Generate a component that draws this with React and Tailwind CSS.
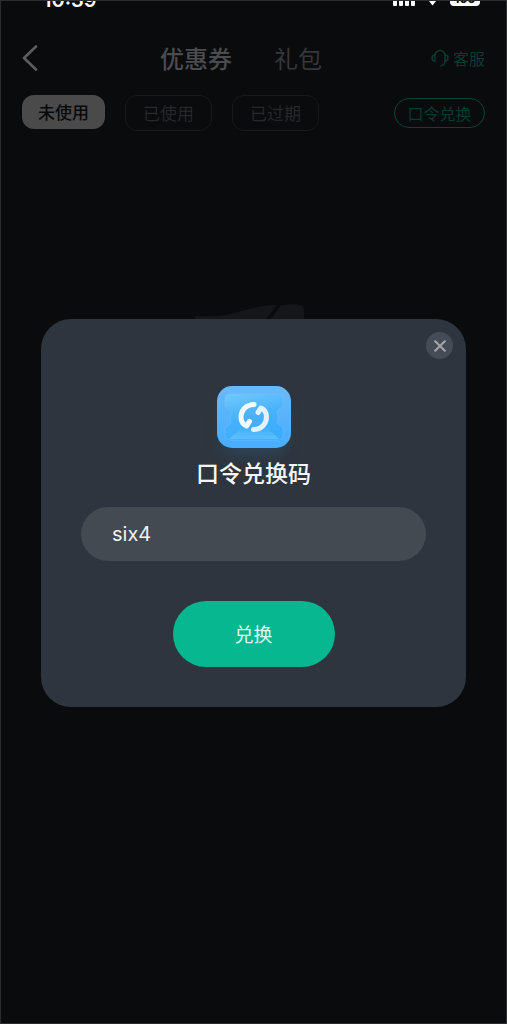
import { useState } from 'react';

const filters = ['未使用', '已使用', '已过期'];

const StatusBar = () => (
  <div className="h-[7px] overflow-hidden flex items-end justify-between pl-[42px] pr-[26px] text-white">
    <span className="text-[20px] leading-4 font-semibold font-['Inter',sans-serif]">10:39</span>
    <svg className="w-[90px] h-[7px]" viewBox="0 0 90 7" fill="currentColor">
      <rect x="3" y="-4" width="4" height="9" rx="1" />
      <rect x="9" y="-4" width="4" height="9" rx="1" />
      <rect x="15" y="-4" width="4" height="9" rx="1" />
      <rect x="21" y="-4" width="4" height="9" rx="1" />
      <path d="M39 0h7l-3.5 4.500z" />
      <rect x="60" y="-10" width="30" height="15" rx="4" />
      <text x="75" y="2" textAnchor="middle" fontSize="12" fontWeight="700" fontFamily="Inter, sans-serif" fill="#07090c">100</text>
    </svg>
  </div>
);

const BackIcon = () => (
  <svg className="w-4 h-[26px]" viewBox="0 0 16 26" fill="none" stroke="currentColor" strokeWidth="2.6" strokeLinecap="round" strokeLinejoin="round">
    <path d="M14 1.5 2 13l12 11.5" />
  </svg>
);

const HeadsetIcon = () => (
  <svg className="w-[18px] h-[18px]" viewBox="0 0 18 18" fill="none" stroke="currentColor" strokeWidth="1.5" strokeLinecap="round" strokeLinejoin="round">
    <path d="M4 12V6.500a5 5 0 0 1 10 0V12c0 2.500-1.500 4.300-4 4.800" />
    <path d="M4 6C2 6 1 7.200 1 9s1 3 3 3M14 6c2 0 3 1.200 3 3s-1 3-3 3" />
  </svg>
);

const CouponIcon = () => (
  <svg className="w-[74px] h-[62px]" viewBox="0 0 74 62" fill="none">
    <defs>
      <linearGradient id="card" x1="0" y1="0" x2="0" y2="1">
        <stop offset="0" stopColor="#6cbaf6" />
        <stop offset="0.5" stopColor="#58b3fb" />
        <stop offset="1" stopColor="#48adff" />
      </linearGradient>
      <linearGradient id="ticket" x1="0" y1="0" x2="0.3" y2="1">
        <stop offset="0" stopColor="#72c8fc" />
        <stop offset="0.55" stopColor="#48b2fc" />
        <stop offset="1" stopColor="#3cacff" />
      </linearGradient>
      <linearGradient id="shine" x1="0" y1="0" x2="0" y2="1">
        <stop offset="0" stopColor="#38acff" />
        <stop offset="1" stopColor="#7fd0ff" />
      </linearGradient>
    </defs>
    <rect width="74" height="62" rx="15" fill="url(#card)" />
    <path
      d="M13 8h48c3 0 5 2 5 5v6c0 3-6 4-6 7 0 2 1 3 1 5s-1 3-1 5c0 3 6 4 6 7v6c0 3-2 5-5 5H13c-3 0-5-2-5-5v-6c0-3 6-4 6-7 0-2-1-3-1-5s1-3 1-5c0-3-6-4-6-7v-6c0-3 2-5 5-5Z"
      fill="url(#ticket)"
      stroke="#7ccbff"
      strokeOpacity="0.3"
    />
    <path d="M12 53 26 40h22l14 13z" fill="url(#shine)" opacity="0.5" />
    <g strokeWidth="5" strokeLinecap="round" strokeLinejoin="round">
      <path d="M37 18.500c-8 0-13 6-13 12.500 0 4 2 7.500 5.500 9l3-4.500" stroke="#f6fbff" />
      <path d="M36.500 43.500c8 0 13-6 13-12.500 0-4-2-7.500-5.500-9l-3 4.500" stroke="#e2f2ff" />
    </g>
  </svg>
);

const EmptyArt = () => (
  <svg className="w-[118px] h-[90px]" viewBox="0 0 118 90">
    <path d="M0 12c14 1 28 0 40-3C54 5 66 1 82 1l-12 15v64H8z" fill="#151618" />
    <path d="M86 1c10-1 17-1 22 1 1 1 1 3 1 6v72H75V16z" fill="#151618" />
  </svg>
);

const RedeemDialog = ({ onClose }) => {
  const [code, setCode] = useState('six4');

  return (
    <div className="fixed inset-0 flex items-center justify-center px-[41px] pt-[2px]">
      <div role="dialog" aria-labelledby="redeem-title" className="relative w-full max-w-md rounded-[30px] bg-[#2e353e] px-10 pt-[67px] pb-10 flex flex-col items-center">
        <button
          type="button"
          aria-label="关闭"
          onClick={onClose}
          className="absolute top-[13px] right-[13px] w-[27px] h-[27px] rounded-full bg-[#464c55] text-[#a3a7ac] flex items-center justify-center"
        >
          <svg className="w-3 h-3" viewBox="0 0 12 12" stroke="currentColor" strokeWidth="2" strokeLinecap="round">
            <path d="M1.200 1.200l9.600 9.600M10.800 1.200l-9.600 9.600" />
          </svg>
        </button>
        <div className="rounded-[15px] shadow-[0_12px_16px_-6px_#2e7fb540]">
          <CouponIcon />
        </div>
        <label id="redeem-title" htmlFor="redeem-code" className="mt-2 text-[23px] leading-8 font-medium text-[#f4f5f6]">
          口令兑换码
        </label>
        <input
          id="redeem-code"
          type="text"
          value={code}
          onChange={(e) => setCode(e.target.value)}
          className="mt-[19px] w-full h-[54px] rounded-full bg-[#444a52] px-[31px] text-[20px] text-[#f0f1f2] font-['Inter',sans-serif] outline-none"
        />
        <button type="button" className="mt-10 w-[162px] h-[66px] rounded-full bg-[#06b78f] text-[19px] text-[#d9fff4]">
          兑换
        </button>
      </div>
    </div>
  );
};

const App = () => {
  const [active, setActive] = useState(filters[0]);
  const [open, setOpen] = useState(true);

  return (
    <div className="min-h-screen bg-[#090b0d] border border-[#2b2f31] font-['Noto_Sans_CJK_SC',sans-serif]">
      <StatusBar />
      <header className="mt-[34px] h-8 px-[21px] flex items-center text-[#4a4c4f]">
        <button type="button" aria-label="返回" className="text-[#5b5d60]">
          <BackIcon />
        </button>
        <nav className="flex-1 pl-[122px] flex items-center gap-[42px] text-2xl">
          <button type="button" className="font-medium">优惠券</button>
          <button type="button" className="text-[#35373a]">礼包</button>
        </nav>
        <a href="#service" className="flex items-center gap-1 text-base text-[#0b3a30]">
          <HeadsetIcon />
          客服
        </a>
      </header>

      <div className="mt-[21px] px-[21px] flex items-center justify-between">
        <div className="flex items-start gap-5">
          {filters.map((name) => (
            <button
              key={name}
              type="button"
              onClick={() => setActive(name)}
              className={`rounded-xl text-[17px] ${
                active === name
                  ? 'w-[83px] h-[34px] bg-[#4a4a4a] text-[#08090a] font-medium'
                  : 'w-[87px] h-9 border border-[#17191b] text-[#26282a]'
              }`}
            >
              {name}
            </button>
          ))}
        </div>
        <button
          type="button"
          onClick={() => setOpen(true)}
          className="w-[91px] h-[30px] rounded-full border border-[#0b4436] text-base leading-none text-[#0b3a30]"
        >
          口令兑换
        </button>
      </div>

      <div className="mt-[173px] flex justify-center">
        <EmptyArt />
      </div>

      {open && <RedeemDialog onClose={() => setOpen(false)} />}
    </div>
  );
};

export default App;
